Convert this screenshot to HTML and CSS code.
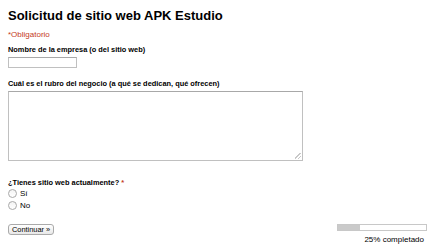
FILE: index.html
```html
<!DOCTYPE html>
<html lang="es">
<head>
    <meta charset="UTF-8">
    <title>Solicitud de sitio web APK Estudio</title>
    <link rel="stylesheet" href="styles.css">
</head>
<body>
    <form class="form">
        <h1 class="form-title">Solicitud de sitio web APK Estudio</h1>
        <div class="required-note">*Obligatorio</div>

        <div class="item">
            <label class="item-title" for="empresa">Nombre de la empresa (o del sitio web)</label>
            <input type="text" id="empresa" class="text-input">
        </div>

        <div class="item">
            <label class="item-title" for="rubro">Cuál es el rubro del negocio (a qué se dedican, qué ofrecen)</label>
            <textarea id="rubro" class="textarea"></textarea>
        </div>

        <div class="item item-radio">
            <div class="item-title">¿Tienes sitio web actualmente? <span class="star">*</span></div>
            <label class="choice"><input type="radio" name="tiene"> Sí</label>
            <label class="choice"><input type="radio" name="tiene"> No</label>
        </div>

        <div class="footer">
            <button type="button" class="btn">Continuar »</button>
            <div class="progress">
                <div class="progress-bar"><div class="progress-fill" style="width: 25%"></div></div>
                <div class="progress-text">25% completado</div>
            </div>
        </div>
    </form>
</body>
</html>
```

FILE: styles.css
```css
body {
    margin: 0;
    padding: 8px;
    font-family: "Liberation Sans", Arial, sans-serif;
    font-size: 8px;
    color: #000;
    background: #fff;
}

.form-title {
    font-size: 13px;
    line-height: 15px;
    margin: 0;
}

.required-note {
    color: #c43b1d;
    margin-top: 7px;
    line-height: 10px;
}

.item {
    margin-top: 5px;
}

.item + .item {
    margin-top: 11px;
}

.item + .item-radio {
    margin-top: 17px;
}

.item-title {
    display: block;
    font-size: 7.4px;
    font-weight: bold;
    line-height: 10px;
    margin-bottom: 2px;
}

.item-radio .item-title {
    margin-bottom: 0;
}

.star {
    color: #c43b1d;
}

.text-input {
    display: block;
    width: 69px;
    height: 11px;
    box-sizing: border-box;
    border: 1px solid #c0c0c0;
    border-top-color: #a8a8a8;
    padding: 0;
    margin: 0;
}

.textarea {
    display: block;
    width: 295px;
    height: 70px;
    box-sizing: border-box;
    border: 1px solid #c0c0c0;
    border-top-color: #a8a8a8;
    padding: 0;
    margin: 0;
    resize: none;
    background:
        linear-gradient(135deg, transparent 40%, #c8c8c8 40%, #c8c8c8 52%, transparent 52%, transparent 70%, #c8c8c8 70%, #c8c8c8 82%, transparent 82%)
        right 1px bottom 1px / 6px 6px no-repeat,
        #fff;
}

.choice {
    display: flex;
    align-items: center;
    gap: 3px;
    height: 11px;
    margin-bottom: 1px;
}

.choice input {
    appearance: none;
    -webkit-appearance: none;
    width: 9px;
    height: 9px;
    margin: 0;
    border: 1px solid #a9a9a9;
    border-radius: 50%;
    background: linear-gradient(#f4f4f4, #fff);
    box-sizing: border-box;
}

.footer {
    display: flex;
    justify-content: space-between;
    align-items: flex-start;
    margin-top: 13px;
}

.btn {
    font-family: "Liberation Sans", Arial, sans-serif;
    font-size: 7.4px;
    line-height: 9px;
    padding: 0 3px;
    height: 11px;
    border: 1px solid #aaa;
    border-radius: 3px;
    background: linear-gradient(#fff, #e8e8e8);
    color: #000;
}

.progress {
    width: 90px;
    margin-right: -5px;
    display: flex;
    flex-direction: column;
    align-items: flex-end;
}

.progress-bar {
    width: 90px;
    height: 7px;
    box-sizing: border-box;
    border: 1px solid #c8c8c8;
    background: #fff;
}

.progress-fill {
    height: 100%;
    background: #cacaca;
}

.progress-text {
    margin-top: 4px;
    margin-right: 3px;
    line-height: 10px;
}
```
